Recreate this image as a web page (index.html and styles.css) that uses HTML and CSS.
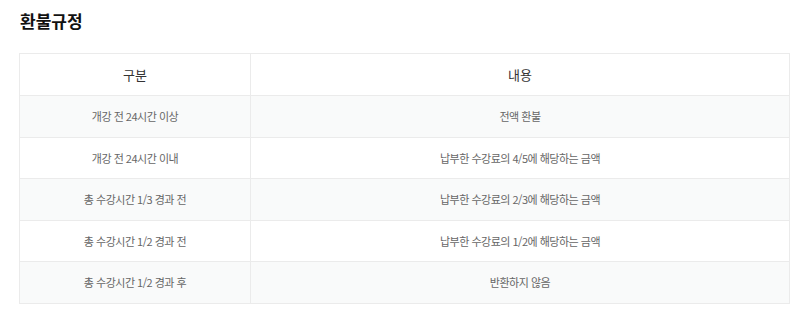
FILE: index.html
```html
<!DOCTYPE html>
<html lang="ko">
<head>
<meta charset="utf-8">
<link rel="stylesheet" href="styles.css">
</head>
<body>
<section class="refund">
  <h2 class="title">환불규정</h2>
  <table class="policy">
    <thead>
      <tr><th class="col-a">구분</th><th>내용</th></tr>
    </thead>
    <tbody>
      <tr class="alt"><td>개강 전 24시간 이상</td><td>전액 환불</td></tr>
      <tr><td>개강 전 24시간 이내</td><td>납부한 수강료의 4/5에 해당하는 금액</td></tr>
      <tr class="alt"><td>총 수강시간 1/3 경과 전</td><td>납부한 수강료의 2/3에 해당하는 금액</td></tr>
      <tr><td>총 수강시간 1/2 경과 전</td><td>납부한 수강료의 1/2에 해당하는 금액</td></tr>
      <tr class="alt"><td>총 수강시간 1/2 경과 후</td><td>반환하지 않음</td></tr>
    </tbody>
  </table>
</section>
</body>
</html>
```
FILE: styles.css
```css
html, body {
  margin: 0;
  padding: 0;
  background: #fff;
}
body {
  font-family: "Noto Sans CJK KR", "Noto Sans", sans-serif;
  color: #333;
}
.refund {
  padding: 10px 20px 0 19px;
}
.title {
  margin: 0 0 21px 1px;
  font-size: 17px;
  line-height: 22px;
  font-weight: 700;
  color: #111;
}
.policy {
  width: 771px;
  border-collapse: collapse;
  table-layout: fixed;
}
.policy th, .policy td {
  border: 1px solid #ebebeb;
  text-align: center;
  vertical-align: middle;
  padding: 0;
}
.policy th {
  height: 41px;
  font-size: 13px;
  font-weight: 400;
  color: #333;
}
.policy td {
  height: 40.5px;
  font-size: 11px;
  letter-spacing: -0.5px;
  color: #666;
}
.col-a {
  width: 230px;
}
.alt td {
  background: #f9fafa;
}
```
